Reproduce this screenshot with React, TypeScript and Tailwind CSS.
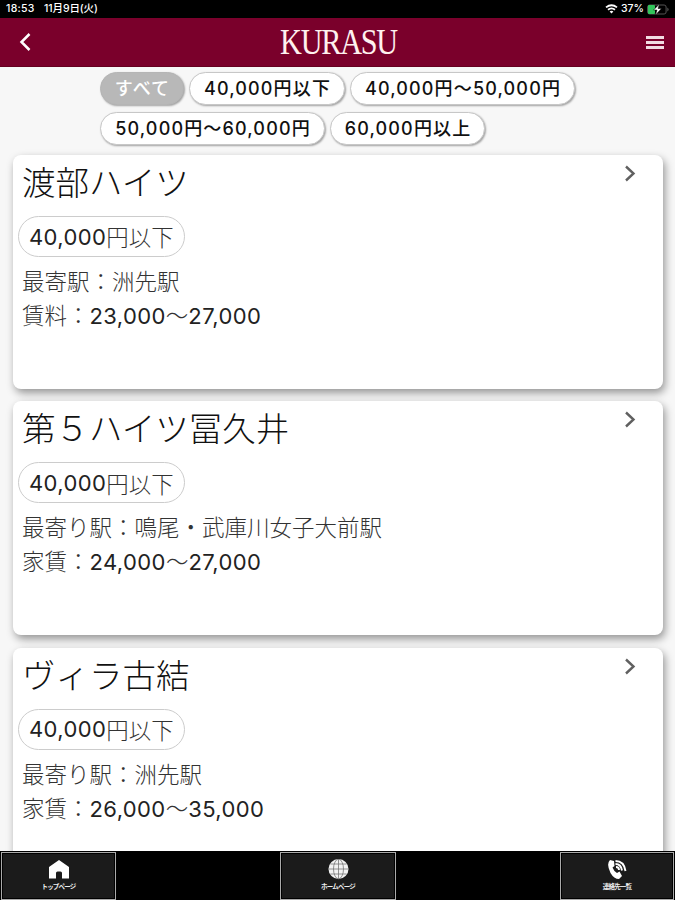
import React from "react";

type Property = { name: string; access: string; rent: string };

const filters = [
  { label: "すべて", active: true, width: "w-[84px]" },
  { label: "40,000円以下", active: false, width: "w-[156px]" },
  { label: "40,000円〜50,000円", active: false, width: "w-[225px]" },
  { label: "50,000円〜60,000円", active: false, width: "w-[225px]" },
  { label: "60,000円以上", active: false, width: "w-[155px]" },
];

const properties: Property[] = [
  { name: "渡部ハイツ", access: "最寄駅：洲先駅", rent: "賃料：23,000〜27,000" },
  { name: "第５ハイツ冨久井", access: "最寄り駅：鳴尾・武庫川女子大前駅", rent: "家賃：24,000〜27,000" },
  { name: "ヴィラ古結", access: "最寄り駅：洲先駅", rent: "家賃：26,000〜35,000" },
];

/** Sets Latin digits in regular weight beside the light Japanese text. */
function Mixed({ text }: { text: string }) {
  return (
    <>
      {text.split(/([0-9,]+)/).map((part, i) =>
        /^[0-9,]+$/.test(part) ? (
          <span key={i} className="font-['Inter',sans-serif] text-[22px] font-normal tracking-[0.4px] text-[#222]">{part}</span>
        ) : (
          <span key={i}>{part}</span>
        ),
      )}
    </>
  );
}

function StatusBar() {
  return (
    <div className="flex h-[18px] shrink-0 items-center bg-black pr-[5px] pl-[6px] font-['Inter','Noto_Sans_CJK_JP',sans-serif] text-[10.5px] leading-none font-medium text-white">
      <span className="w-[38px] tracking-[0.3px]">18:53</span>
      <span className="tracking-[-0.1px]">11月9日(火)</span>
      <svg className="ml-auto h-[10px] w-[13px]" viewBox="0 0 13 10" fill="none" stroke="white" strokeWidth="1.8">
        <path d="M1 3.4Q6.5-1 12 3.4M3 5.7Q6.5 3 10 5.7" />
        <path d="M4.6 7.4L6.5 9.5L8.4 7.4Q6.5 6 4.6 7.4Z" fill="white" stroke="none" />
      </svg>
      <span className="ml-[3px] w-[25px] tracking-[-0.1px]">37%</span>
      <svg className="h-[11px] w-[24px]" viewBox="0 0 24 11">
        <rect x="1.6" y="1" width="18.5" height="9" rx="2" fill="none" stroke="#555" />
        <rect x="2" y="1" width="7" height="9" rx="1" fill="#32c45b" />
        <path d="M21.5 3.5Q23.5 5.5 21.5 7.5Z" fill="#777" />
        <path d="M13.5 0L7.5 6H11L9.5 11L15.5 4.5H12Z" fill="white" stroke="black" strokeWidth=".5" />
      </svg>
    </div>
  );
}

function Header() {
  return (
    <header className="flex h-[49px] shrink-0 items-center justify-between border-b border-[#650020] bg-[#7a002b] pr-[11px] pl-[18px]">
      <svg className="h-[20px] w-[14px]" viewBox="0 0 14 20" fill="none" stroke="white" strokeWidth="2.5">
        <path d="M11.5 2L3.5 10L11.5 18" />
      </svg>
      <div className="flex w-[160px] justify-center">
        <span className="scale-x-[0.84] font-['Liberation_Serif',serif] text-[36px] leading-[48px] font-normal tracking-[-1.5px] text-[#fff1ef]">KURASU</span>
      </div>
      <div className="flex w-[18px] flex-col gap-[2px]">
        <span className="h-[3px] bg-[#f1dce2]" />
        <span className="h-[3px] bg-[#f1dce2]" />
        <span className="h-[3px] bg-[#f1dce2]" />
      </div>
    </header>
  );
}

function Card({ property }: { property: Property }) {
  return (
    <article className="flex h-[233.5px] shrink-0 justify-between rounded-[8px] bg-white pr-[26px] pl-[5px] shadow-[2px_4px_8px_rgba(0,0,0,0.4)]">
      <div className="flex flex-col items-start whitespace-nowrap text-[#333]">
        <h2 className="mt-[6px] ml-[4px] h-[40px] text-[33.5px] leading-[40px] font-light text-[#111]">{property.name}</h2>
        <span className="mt-[15px] flex h-[41px] w-[167px] items-center rounded-full border border-[#ccc] pl-[10px] text-[22.4px] leading-none">
          <Mixed text="40,000円以下" />
        </span>
        <p className="mt-[6px] ml-[4px] h-[34px] text-[22.5px] leading-[34px]">{property.access}</p>
        <p className="ml-[4px] h-[34px] text-[22.5px] leading-[34px]"><Mixed text={property.rent} /></p>
      </div>
      <svg className="mt-[9px] h-[19px] w-[13px]" viewBox="0 0 13 19" fill="none" stroke="#606060" strokeWidth="2.4">
        <path d="M2 2.5L9.5 9.5L2 16.5" />
      </svg>
    </article>
  );
}

function NavTile({ label, children, className }: { label: string; children: React.ReactNode; className: string }) {
  return (
    <div className={`flex shrink-0 flex-col items-center border border-[#aaa] bg-[#1b1b1b] pt-[6px] outline outline-1 -outline-offset-2 outline-black ${className}`}>
      {children}
      <span className="mt-[2px] text-[6.5px] leading-[9px] font-bold tracking-[-0.8px] text-[#eee]">{label}</span>
    </div>
  );
}

function BottomNav() {
  return (
    <nav className="flex h-[49px] shrink-0 bg-black">
      <NavTile label="トップページ" className="mt-[1px] ml-[1px] w-[115px]">
        <svg className="h-[21px] w-[22px]" viewBox="0 0 22 21" fill="white">
          <path d="M11 1L1 8V19.5H8V14Q8 12.5 9.5 12.5H12.5Q14 12.5 14 14V19.5H21V8Z" />
        </svg>
      </NavTile>
      <div className="w-[164px]" />
      <NavTile label="ホームページ" className="mt-[1px] w-[116px]">
        <svg className="h-[21px] w-[21px]" viewBox="0 0 21 21" fill="none" stroke="#777" strokeWidth=".8">
          <circle cx="10.5" cy="10" r="10" fill="#f2f2f2" stroke="none" />
          <ellipse cx="10.5" cy="10" rx="5" ry="9.8" />
          <path d="M10.5 0V20M1 10H20M2.4 5H18.6M2.4 15H18.6" />
        </svg>
      </NavTile>
      <div className="w-[164px]" />
      <NavTile label="連絡先一覧" className="mt-[1px] w-[114px]">
        <svg className="h-[21px] w-[20px]" viewBox="0 0 20 21" fill="none" stroke="white">
          <path d="M3 1L7 2L7.5 7L5.5 8.5Q7 12.5 10 14L12.5 12.5L15 17L12 20Q7 20 3.5 14Q-1 5 3 1Z" fill="white" stroke="none" />
          <path d="M8.5 2Q17 2 18.5 12M8.5 5Q14 5 15 11.5M9 8Q12 8 12 11" strokeWidth="1.9" />
        </svg>
      </NavTile>
    </nav>
  );
}

export default function App() {
  return (
    <div className="flex h-[900px] w-[675px] flex-col overflow-hidden bg-[#f7f7f7] font-['Noto_Sans_CJK_JP',sans-serif] font-light">
      <StatusBar />
      <Header />
      <main className="flex min-h-0 flex-1 flex-col overflow-hidden">
        <div className="ml-[100px] flex h-[88px] w-[500px] shrink-0 flex-wrap content-start gap-x-[5px] gap-y-[7px] self-start pt-[5px]">
          {filters.map((filter) => (
            <button
              key={filter.label}
              className={`flex h-[33px] items-center justify-center rounded-full border pl-[1px] font-['Inter','Noto_Sans_CJK_JP',sans-serif] text-[18px] leading-none font-medium tracking-[1.15px] whitespace-nowrap shadow-[1px_1px_2px_rgba(0,0,0,0.35)] ${filter.width} ${filter.active ? "border-[#b5b5b5] bg-[#b8b8b8] text-white" : "border-[#c7c7c7] bg-white text-[#111]"}`}
            >
              {filter.label}
            </button>
          ))}
        </div>
        <div className="flex flex-col gap-[12.75px] pr-[12px] pl-[13px]">
          {properties.map((property) => (
            <Card key={property.name} property={property} />
          ))}
        </div>
      </main>
      <BottomNav />
    </div>
  );
}
